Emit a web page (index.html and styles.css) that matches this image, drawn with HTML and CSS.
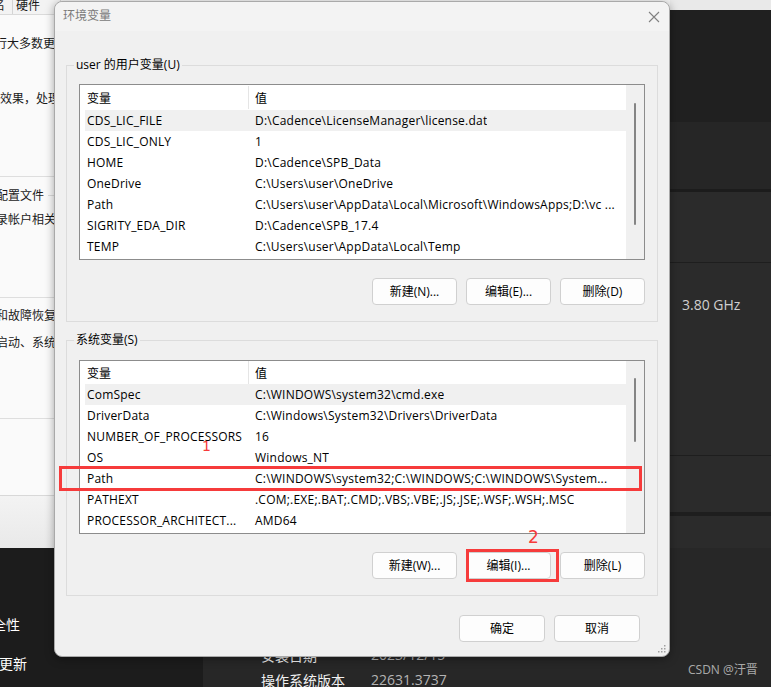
FILE: index.html
```html
<!DOCTYPE html>
<html lang="zh-CN">
<head>
<meta charset="utf-8">
<title>环境变量</title>
<link rel="stylesheet" href="styles.css">
</head>
<body>
<div class="screen">
  <div class="sysprops">
    <div class="tabs">
      <span class="tab tab-cut">计算机名</span>
      <span class="tab tab-hw">硬件</span>
    </div>
    <div class="sp-text t1">进行大多数更</div>
    <div class="sp-text t2">效果，处理</div>
    <div class="sp-rule r1"></div>
    <div class="sp-text sp-group t3"><span>配置文件</span></div>
    <div class="sp-text t4">录帐户相关</div>
    <div class="sp-rule r2"></div>
    <div class="sp-text sp-group t5"><span>和故障恢复</span></div>
    <div class="sp-text t6">启动、系统</div>
    <div class="sp-rule r3"></div>
    <div class="sp-rule r4"></div>
    <div class="sp-foot"></div>
  </div>

  <div class="panels">
    <div class="pn pn-light"></div>
    <div class="pn pn-a"></div>
    <div class="pn pn-b"></div>
    <div class="pn pn-gap3"></div>
    <div class="pn pn-c"></div>
    <div class="pn pn-gap1"></div>
    <div class="pn pn-d"><span class="ghz">3.80 GHz</span></div>
    <div class="pn pn-gap1"></div>
    <div class="pn pn-e"></div>
    <div class="pn pn-gap4"></div>
    <div class="pn pn-f"></div>
  </div>

  <div class="bottom-left">
    <div class="bl-item bl-1">安全性</div>
    <div class="bl-item bl-2">更新</div>
  </div>
  <div class="bottom-right">
    <div class="info-row ir-1"><span class="info-k">安装日期</span><span class="info-v">2023/12/15</span></div>
    <div class="info-row ir-2"><span class="info-k">操作系统版本</span><span class="info-v">22631.3737</span></div>
  </div>

  <div class="dialog">
    <div class="titlebar">
      <span class="title">环境变量</span>
      <svg class="close" width="12" height="12" viewBox="0 0 12 12"><path d="M1 1 L11 11 M11 1 L1 11" stroke="#808080" stroke-width="1.1" fill="none"/></svg>
    </div>
    <div class="dlg-body">
      <div class="group g1">
        <span class="legend">user 的用户变量(U)</span>
        <div class="listview">
          <div class="lv-main">
            <div class="lv-head"><span class="hc1">变量</span><span class="hc2">值</span></div>
            <div class="lv-row sel"><span class="c1">CDS_LIC_FILE</span><span class="c2">D:\Cadence\LicenseManager\license.dat</span></div>
            <div class="lv-row"><span class="c1">CDS_LIC_ONLY</span><span class="c2">1</span></div>
            <div class="lv-row"><span class="c1">HOME</span><span class="c2">D:\Cadence\SPB_Data</span></div>
            <div class="lv-row"><span class="c1">OneDrive</span><span class="c2">C:\Users\user\OneDrive</span></div>
            <div class="lv-row"><span class="c1">Path</span><span class="c2">C:\Users\user\AppData\Local\Microsoft\WindowsApps;D:\vc ...</span></div>
            <div class="lv-row"><span class="c1">SIGRITY_EDA_DIR</span><span class="c2">D:\Cadence\SPB_17.4</span></div>
            <div class="lv-row"><span class="c1">TEMP</span><span class="c2">C:\Users\user\AppData\Local\Temp</span></div>
          </div>
          <div class="lv-scroll"><div class="thumb thumb1"></div></div>
        </div>
        <div class="btn-row">
          <button class="btn">新建(N)...</button>
          <button class="btn">编辑(E)...</button>
          <button class="btn">删除(D)</button>
        </div>
      </div>

      <div class="group g2">
        <span class="legend">系统变量(S)</span>
        <div class="listview lv2">
          <div class="lv-main">
            <div class="lv-head"><span class="hc1">变量</span><span class="hc2">值</span></div>
            <div class="lv-row sel"><span class="c1">ComSpec</span><span class="c2">C:\WINDOWS\system32\cmd.exe</span></div>
            <div class="lv-row"><span class="c1">DriverData</span><span class="c2">C:\Windows\System32\Drivers\DriverData</span></div>
            <div class="lv-row"><span class="c1">NUMBER_OF_PROCESSORS</span><span class="c2">16</span></div>
            <div class="lv-row"><span class="c1">OS</span><span class="c2">Windows_NT</span></div>
            <div class="lv-row"><span class="c1">Path</span><span class="c2">C:\WINDOWS\system32;C:\WINDOWS;C:\WINDOWS\System...</span></div>
            <div class="lv-row"><span class="c1">PATHEXT</span><span class="c2">.COM;.EXE;.BAT;.CMD;.VBS;.VBE;.JS;.JSE;.WSF;.WSH;.MSC</span></div>
            <div class="lv-row"><span class="c1">PROCESSOR_ARCHITECT...</span><span class="c2">AMD64</span></div>
          </div>
          <div class="lv-scroll"><div class="thumb thumb2"></div></div>
        </div>
        <div class="btn-row">
          <button class="btn">新建(W)...</button>
          <button class="btn">编辑(I)...</button>
          <button class="btn">删除(L)</button>
        </div>
      </div>

      <div class="ok-row">
        <button class="btn btn-ok">确定</button>
        <button class="btn btn-ok">取消</button>
      </div>
    </div>
    <svg class="grip" width="8" height="8" viewBox="0 0 8 8">
      <rect x="6" y="0" width="1.5" height="1.5" fill="#a0a0a0"/>
      <rect x="3" y="3" width="1.5" height="1.5" fill="#a0a0a0"/>
      <rect x="6" y="3" width="1.5" height="1.5" fill="#a0a0a0"/>
      <rect x="0" y="6" width="1.5" height="1.5" fill="#a0a0a0"/>
      <rect x="3" y="6" width="1.5" height="1.5" fill="#a0a0a0"/>
      <rect x="6" y="6" width="1.5" height="1.5" fill="#a0a0a0"/>
    </svg>
  </div>

  <div class="mark mark-box1"></div>
  <div class="mark mark-box2"></div>
  <div class="mark mark-n1">1</div>
  <div class="mark mark-n2">2</div>
  <div class="watermark">CSDN @汙晋</div>
</div>
</body>
</html>
```

FILE: styles.css
```css
* { box-sizing: border-box; }
html, body { margin: 0; padding: 0; }
body {
  width: 771px;
  height: 687px;
  overflow: hidden;
  font-family: "Open Sans", "Noto Sans CJK SC", sans-serif;
  font-size: 12px;
  color: #000;
}
.screen {
  position: relative;
  width: 771px;
  height: 687px;
  display: grid;
  grid-template-columns: 203px 467px 101px;
  grid-template-rows: 548px 139px;
  background: #202020;
  overflow: hidden;
}

/* ---------- background: system properties window ---------- */
.sysprops {
  grid-column: 1 / 3;
  grid-row: 1;
  background: #fafafa;
  display: flex;
  flex-direction: column;
  overflow: hidden;
  font-family: "Noto Sans CJK SC", sans-serif;
  color: #1a1a1a;
}
.tabs {
  height: 15px;
  flex: none;
  background: #f3f3f3;
  border-bottom: 1px solid #dadada;
  display: flex;
  overflow: hidden;
}
.tab {
  line-height: 14px;
  margin-top: -2px;
  padding: 0 6px 0 3px;
  border-right: 1px solid #d4d4d4;
  white-space: nowrap;
}
.tab-cut { margin-left: -46px; padding-right: 7px; }
.tab-hw { padding-right: 20px; }
.sp-text {
  line-height: 16px;
  height: 16px;
  white-space: nowrap;
  margin-left: -5px;
  flex: none;
}
.t1 { margin-top: 20px; margin-left: -17px; }
.t2 { margin-top: 39px; margin-left: 0; }
.sp-rule { height: 1px; background: #dedede; flex: none; }
.r1 { margin-top: 70px; }
.t3 { margin-top: 10px; display: flex; align-items: center; margin-left: -4px; }
.sp-group::after { content: ""; flex: 1; height: 1px; background: #dcdcdc; margin-left: 4px; }
.t4 { margin-top: 8px; margin-left: -4px; }
.r2 { margin-top: 70px; }
.t5 { margin-top: 9px; display: flex; align-items: center; margin-left: -4px; }
.t6 { margin-top: 11px; margin-left: -4px; }
.r3 { margin-top: 68px; }
.r4 { margin-top: 76px; background: #d8d8d8; }
.sp-foot { flex: 1; background: linear-gradient(#f3f3f3, #e9e9e9); }

/* ---------- background: dark settings panels ---------- */
.panels {
  grid-column: 3;
  grid-row: 1;
  display: flex;
  flex-direction: column;
}
.pn { flex: none; }
.pn-light { height: 10px; background: #e9e9e9; }
.pn-a { height: 112px; background: #202020; }
.pn-b { height: 67px; background: #262626; }
.pn-gap3 { height: 3px; background: #1c1c1c; }
.pn-c { height: 70px; background: #2b2b2b; }
.pn-gap1 { height: 1px; background: #1e1e1e; }
.pn-d { height: 192px; background: #2b2b2b; padding: 32px 0 0 12px; }
.pn-e { height: 56px; background: #2b2b2b; }
.pn-gap4 { height: 4px; background: #1e1e1e; }
.pn-f { height: 32px; background: #2b2b2b; }
.ghz {
  display: block;
  line-height: 20px;
  font-size: 14px;
  color: #cfcfcf;
  font-family: "Open Sans", sans-serif;
}

.bottom-left {
  grid-column: 1;
  grid-row: 2;
  background: #1c1c1c;
  display: flex;
  flex-direction: column;
  font-family: "Noto Sans CJK SC", sans-serif;
  font-size: 14px;
  color: #ffffff;
}
.bl-item { line-height: 20px; white-space: nowrap; }
.bl-1 { margin-top: 66px; margin-left: -22px; }
.bl-2 { margin-top: 19px; margin-left: -1px; }

.bottom-right {
  grid-column: 2 / 4;
  grid-row: 2;
  background: #272727;
  display: flex;
  flex-direction: column;
  padding-left: 58px;
  font-size: 14px;
}
.info-row { display: flex; line-height: 20px; white-space: nowrap; }
.ir-1 { margin-top: 97px; }
.ir-2 { margin-top: 5px; }
.info-k { width: 110px; color: #f0f0f0; font-family: "Noto Sans CJK SC", sans-serif; }
.info-v { color: #b4b4b4; }

.watermark {
  position: absolute;
  left: 688px;
  top: 662px;
  line-height: 16px;
  font-size: 12px;
  color: rgba(255, 255, 255, 0.62);
  white-space: nowrap;
}

/* ---------- dialog ---------- */
.dialog {
  position: absolute;
  left: 54px;
  top: 1px;
  width: 616px;
  height: 656px;
  background: #f0f0f0;
  border: 1px solid #a9a9a9;
  border-radius: 8px;
  box-shadow: 0 2px 10px rgba(0, 0, 0, 0.35);
  display: flex;
  flex-direction: column;
}
.titlebar {
  height: 29px;
  flex: none;
  background: #f3f3f3;
  border-radius: 8px 8px 0 0;
  display: flex;
  align-items: center;
  justify-content: space-between;
  padding: 0 9px 3px 8px;
}
.title {
  font-family: "Noto Sans CJK SC", sans-serif;
  color: #7a7a7a;
  line-height: 16px;
}
.close { display: block; margin-top: 3px; }
.dlg-body {
  flex: 1;
  display: flex;
  flex-direction: column;
  padding: 0 11px;
}
.group {
  border: 1px solid #dcdcdc;
  padding: 0 12px 16px 12px;
  display: flex;
  flex-direction: column;
}
.g1 { margin-top: 34px; }
.g2 { margin-top: 18px; }
.legend {
  align-self: flex-start;
  line-height: 16px;
  margin-top: -9px;
  margin-left: -5px;
  padding: 0 2px;
  background: #f0f0f0;
  white-space: nowrap;
}
.listview {
  margin-top: 11px;
  height: 176px;
  border: 1px solid #8c8c8c;
  background: #ffffff;
  display: flex;
}
.lv2 { margin-top: 12px; height: 174px; }
.lv-main { flex: 1; min-width: 0; overflow: hidden; }
.lv-head {
  height: 25px;
  display: flex;
  align-items: center;
}
.lv2 .lv-head { height: 23px; }
.hc1 {
  width: 169px;
  padding-left: 7px;
  line-height: 23px;
  border-right: 1px solid #e5e5e5;
  font-family: "Noto Sans CJK SC", sans-serif;
}
.hc2 {
  padding-left: 6px;
  font-family: "Noto Sans CJK SC", sans-serif;
}
.lv-row {
  height: 21px;
  line-height: 21px;
  margin-left: 5px;
  display: flex;
  white-space: nowrap;
}
.lv-row.sel { background: #f0f0f0; }
.c1 { width: 164px; padding-left: 2px; overflow: hidden; flex: none; letter-spacing: 0.2px; }
.c2 { padding-left: 6px; overflow: hidden; letter-spacing: 0.22px; }
.lv-scroll {
  width: 18px;
  flex: none;
  background: #f0f0f0;
  display: flex;
  justify-content: center;
}
.thumb { width: 2px; background: #858585; border-radius: 1px; }
.thumb1 { margin-top: 18px; height: 122px; }
.thumb2 { margin-top: 17px; height: 64px; }

.btn-row {
  margin-top: 18px;
  display: flex;
  justify-content: flex-end;
  gap: 9px;
}
.btn {
  width: 85px;
  height: 27px;
  padding: 0;
  background: #fdfdfd;
  border: 1px solid #d0d0d0;
  border-radius: 4px;
  font-family: "Open Sans", "Noto Sans CJK SC", sans-serif;
  font-size: 12px;
  color: #000;
  line-height: 25px;
}
.ok-row {
  margin-top: 19px;
  margin-right: 18px;
  display: flex;
  justify-content: flex-end;
  gap: 9px;
}
.btn-ok { width: 86px; }
.grip {
  position: absolute;
  right: 3px;
  bottom: 3px;
}

/* ---------- annotations ---------- */
.mark { position: absolute; }
.mark-box1 {
  left: 59px;
  top: 466px;
  width: 583px;
  height: 25px;
  border: 3px solid #f63b3b;
}
.mark-box2 {
  left: 466px;
  top: 549px;
  width: 93px;
  height: 33px;
  border: 3px solid #f63b3b;
}
.mark-n1 {
  left: 202px;
  top: 437px;
  font-family: "DejaVu Sans", sans-serif;
  font-size: 14px;
  line-height: 18px;
  color: #f63b3b;
}
.mark-n2 {
  left: 528px;
  top: 527px;
  font-family: "DejaVu Sans", sans-serif;
  font-size: 17px;
  line-height: 20px;
  color: #f63b3b;
}
```
